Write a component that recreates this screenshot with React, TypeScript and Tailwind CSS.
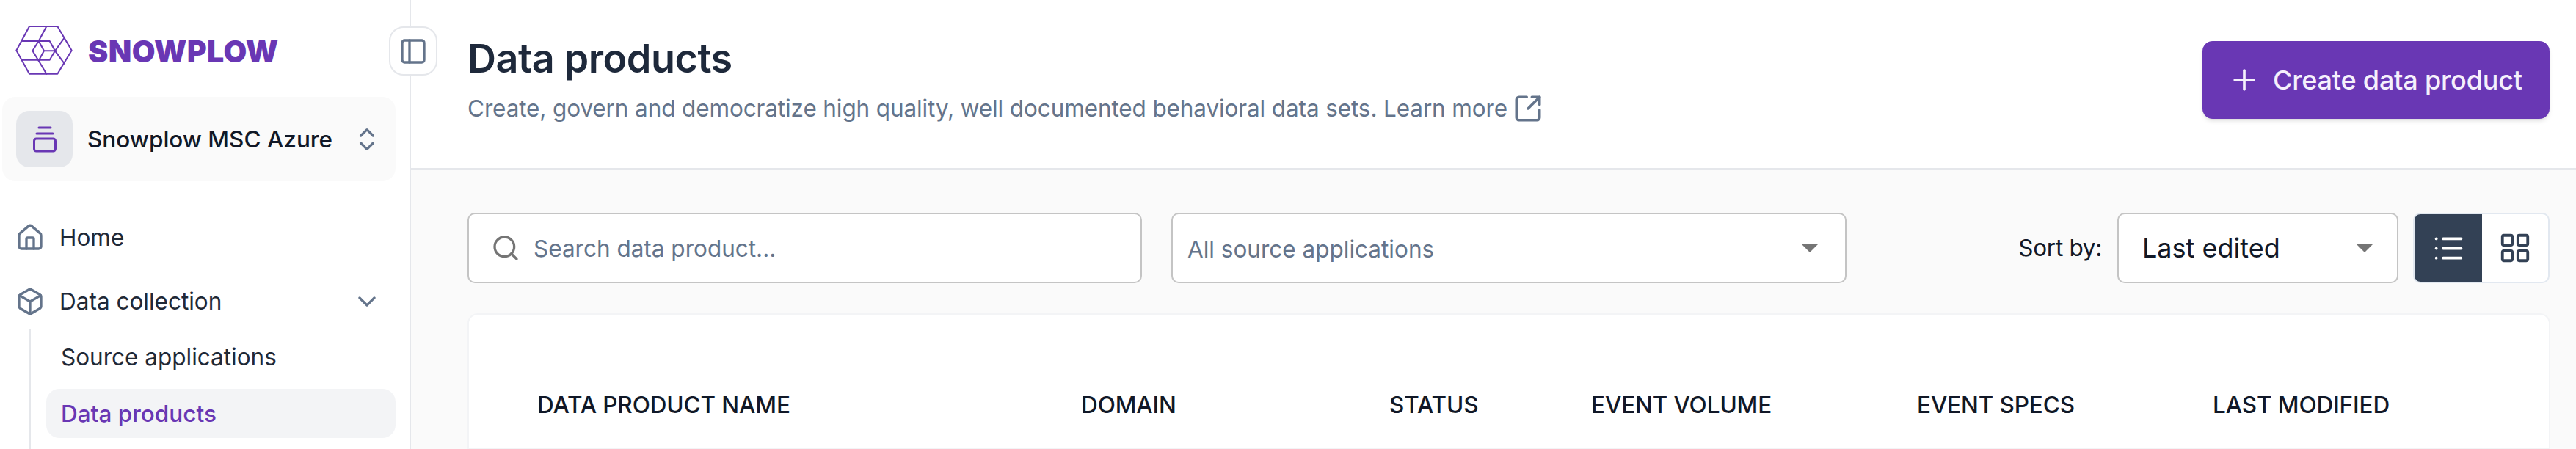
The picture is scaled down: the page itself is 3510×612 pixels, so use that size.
import React from 'react';
import {
    Box,
    ChevronDown,
    ChevronsUpDown,
    House,
    LayoutGrid,
    List,
    PanelLeft,
    Plus,
    Search,
    SquareArrowOutUpRight,
} from 'lucide-react';

const columns = ['DATA PRODUCT NAME', 'DOMAIN', 'STATUS', 'EVENT VOLUME', 'EVENT SPECS', 'LAST MODIFIED'];

const Logo: React.FC = () => (
    <svg viewBox="0 0 270 240" className="w-[90px] h-[80px] shrink-0" fill="none" stroke="#6937b4" strokeWidth="6" strokeLinejoin="round" strokeLinecap="round">
        <path d="M22 116 L75 18 H190 L248 116 L190 212 H75 Z" />
        <path d="M145 18 L113 78 L88 118 L113 158 L145 212" />
        <path d="M47 78 H158 L180 118 L158 155 H47" />
        <path d="M113 78 L135 118 L113 158 M135 118 H180" />
        <path d="M218 65 L180 118 L218 170" />
    </svg>
);

const WorkspaceIcon: React.FC = () => (
    <svg viewBox="0 0 32 36" className="w-[32px] h-[36px]" fill="none" stroke="#6937b4" strokeWidth="3" strokeLinecap="round" strokeLinejoin="round">
        <path d="M8 2 H24" />
        <path d="M5 10 H27" />
        <rect x="1.5" y="17" width="29" height="17" rx="3" />
    </svg>
);

const Caret: React.FC = () => (
    <span className="w-0 h-0 border-l-[12px] border-r-[12px] border-t-[12px] border-l-transparent border-r-transparent border-t-[#757575]" />
);

const Sidebar: React.FC = () => (
    <aside className="w-[560px] shrink-0 h-full border-r-2 border-[#e5e7eb] bg-white flex flex-col">
        <div className="flex items-center pl-[15px] pt-[30px] h-[110px]">
            <Logo />
            <span className="ml-[15px] text-[41px] leading-none font-black text-[#6937b4] tracking-[0.4px]">SNOWPLOW</span>
        </div>
        <div className="mt-[22px] mx-[3px] w-[536px] h-[115px] rounded-[18px] bg-[#fafafa] flex items-center pl-[19px] pr-[19px]">
            <div className="w-[77px] h-[77px] rounded-[18px] bg-[#e5e7eb] flex items-center justify-center">
                <WorkspaceIcon />
            </div>
            <span className="ml-[20px] text-[31.5px] font-medium text-[#111827]">Snowplow MSC Azure</span>
            <ChevronsUpDown className="ml-auto w-[40px] h-[40px] text-[#64748b]" strokeWidth={2} />
        </div>
        <nav className="mt-[43px] flex flex-col gap-[20px]">
            <div className="h-[67px] flex items-center pl-[21px] text-[31.5px] text-[#1f2937]">
                <House className="w-[40px] h-[40px] text-[#64748b]" strokeWidth={2} />
                <span className="ml-[20px]">Home</span>
            </div>
            <div className="h-[67px] flex items-center pl-[21px] text-[31.5px] text-[#1f2937]">
                <Box className="w-[40px] h-[40px] text-[#64748b]" strokeWidth={2} />
                <span className="ml-[20px]">Data collection</span>
                <ChevronDown className="ml-auto mr-[38px] w-[40px] h-[40px] text-[#64748b]" strokeWidth={2} />
            </div>
        </nav>
        <div className="ml-[40px] mr-[19px] mt-[5px] pl-[21px] pt-[4px] flex-1 border-l-2 border-[#e5e7eb] flex flex-col gap-[10px] text-[31.5px]">
            <div className="h-[67px] flex items-center pl-[20px] text-[#1f2937]">Source applications</div>
            <div className="h-[67px] flex items-center pl-[20px] rounded-[18px] bg-[#f3f4f6] font-medium text-[#6937b4]">Data products</div>
        </div>
    </aside>
);

const App: React.FC = () => {
    return (
        <div className="relative w-[3510px] h-[612px] overflow-hidden flex bg-[#fafafa] font-['Inter',sans-serif]">
            <Sidebar />
            <button className="absolute left-[530px] top-[36px] w-[66px] h-[67px] rounded-[20px] border-2 border-[#e5e7eb] bg-white flex items-center justify-center">
                <PanelLeft className="w-[40px] h-[40px] text-[#64748b]" strokeWidth={2} />
            </button>
            <main className="flex-1 min-w-0 flex flex-col">
                <header className="h-[232px] shrink-0 bg-white border-b-[3px] border-[#e5e7eb] flex items-start justify-between pl-[77px] pr-[36px]">
                    <div className="pt-[48px]">
                        <h1 className="text-[54px] leading-[64px] font-semibold text-[#1e293b] tracking-[-0.5px]">Data products</h1>
                        <p className="mt-[12px] flex items-center text-[31.5px] leading-[48px] text-[#64748b] tracking-[-0.12px]">
                            Create, govern and democratize high quality, well documented behavioral data sets. Learn more
                            <SquareArrowOutUpRight className="ml-[7px] w-[42px] h-[42px]" strokeWidth={2} />
                        </p>
                    </div>
                    <button className="mt-[56px] w-[473px] h-[106px] rounded-[14px] bg-[#6937b4] shadow-md text-[#f5f0fc] text-[36px] font-medium tracking-[-0.2px] flex items-center pl-[35px]">
                        <Plus className="w-[44px] h-[44px]" strokeWidth={2} />
                        <span className="ml-[17px]">Create data product</span>
                    </button>
                </header>
                <section className="flex-1 min-h-0 pl-[77px] pr-[36px] pt-[58px] flex flex-col">
                    <div className="h-[96px] shrink-0 flex items-stretch">
                        <div className="w-[919px] rounded-[10px] border-2 border-[#c4c4c4] bg-white flex items-center pl-[30px] text-[31.5px] text-[#64748b]">
                            <Search className="w-[40px] h-[40px] text-[#757575]" strokeWidth={2} />
                            <span className="ml-[18px] pt-[2px]">Search data product...</span>
                        </div>
                        <div className="ml-[40px] w-[920px] rounded-[10px] border-2 border-[#c4c4c4] bg-white flex items-center justify-between pl-[20px] pr-[36px] text-[31.5px] text-[#64748b]">
                            <span className="pt-[4px]">All source applications</span>
                            <Caret />
                        </div>
                        <div className="ml-auto flex items-center text-[31.5px] text-[#111827] tracking-[-0.3px]">Sort by:</div>
                        <div className="ml-[21px] w-[383px] rounded-[10px] border-2 border-[#c4c4c4] bg-white flex items-center justify-between pl-[32px] pr-[32px] text-[36px] text-[#111827]">
                            <span>Last edited</span>
                            <Caret />
                        </div>
                        <div className="ml-[20px] w-[186px] rounded-[10px] border-2 border-[#e2e8f0] bg-white flex overflow-hidden">
                            <div className="w-[92px] bg-[#334155] flex items-center justify-center">
                                <List className="w-[45px] h-[45px] text-white" strokeWidth={2} />
                            </div>
                            <div className="flex-1 flex items-center justify-center">
                                <LayoutGrid className="w-[46px] h-[46px] text-[#334155]" strokeWidth={2} />
                            </div>
                        </div>
                    </div>
                    <div className="mt-[41px] flex-1 -mr-[1px] rounded-t-[14px] border-2 border-[#f3f4f6] bg-white pl-[93px] pt-[99px]">
                        <div className="grid grid-cols-[741px_420px_275px_444px_403px_1fr] text-[31.5px] leading-[48px] font-medium text-[#111827] tracking-[-0.1px]">
                            {columns.map((col) => (
                                <span key={col}>{col}</span>
                            ))}
                        </div>
                    </div>
                </section>
            </main>
        </div>
    );
};

export default App;
